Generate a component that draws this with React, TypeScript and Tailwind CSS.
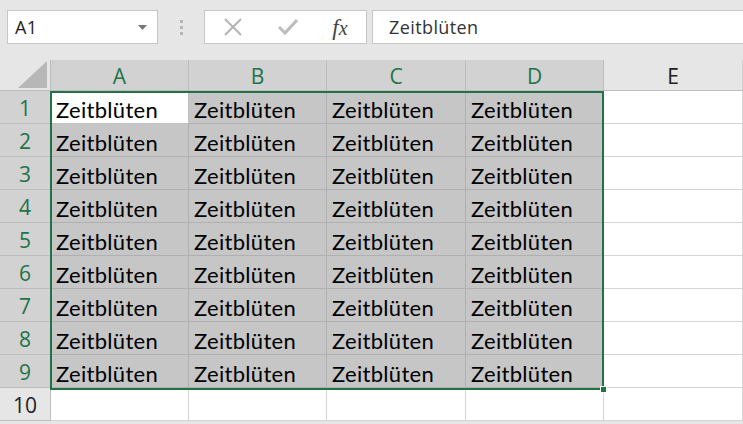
import React from "react";

const cols = ["A", "B", "C", "D", "E"];
const rows = [1, 2, 3, 4, 5, 6, 7, 8, 9, 10];

export default function App() {
  return (
    <div className="w-[743px] h-[424px] overflow-hidden bg-[#e6e6e6] relative" style={{ fontFamily: "'Noto Sans', sans-serif" }}>
      {/* top bar */}
      <div className="h-[60px] flex items-start pt-[10px]">
        <div className="ml-[7px] w-[151px] h-[34px] bg-white border border-[#c6c6c6] flex items-center justify-between pl-[7px] pr-[10px]">
          <span className="text-[18px] text-[#222] tracking-[0.3px] pt-[1px]" style={{ fontFamily: "'Open Sans', sans-serif" }}>A1</span>
          <svg width="9" height="5" viewBox="0 0 9 5"><path d="M0 0h9L4.5 5z" fill="#777" /></svg>
        </div>
        <div className="w-[46px] h-[34px] flex flex-col items-center justify-center gap-[3px]">
          <div className="w-[3px] h-[3px] bg-[#b5b5b5]" />
          <div className="w-[3px] h-[3px] bg-[#b5b5b5]" />
          <div className="w-[3px] h-[3px] bg-[#b5b5b5]" />
        </div>
        <div className="w-[163px] h-[34px] bg-white border border-[#c6c6c6] flex items-center">
          <div className="w-[56px] flex justify-center">
            <svg width="20" height="20" viewBox="0 0 20 20"><path d="M2 2L18 18M18 2L2 18" stroke="#b4b4b4" strokeWidth="2" /></svg>
          </div>
          <div className="w-[54px] flex justify-center">
            <svg width="20" height="18" viewBox="0 0 20 18"><path d="M1 9l6 6L19 2" stroke="#bcbcbc" strokeWidth="3" fill="none" /></svg>
          </div>
          <div className="w-[50px] flex justify-center">
            <span className="text-[23px] italic text-[#444] leading-none" style={{ fontFamily: "'Liberation Serif', serif" }}>f<span className="text-[20px]">x</span></span>
          </div>
        </div>
        <div className="ml-[5px] flex-1 h-[34px] bg-white border border-[#c6c6c6] border-r-0 flex items-center pl-[16px]">
          <span className="text-[18px] text-[#333] tracking-[0.4px] pt-[1px]" style={{ fontFamily: "'Open Sans', sans-serif" }}>Zeitblüten</span>
        </div>
      </div>

      {/* grid */}
      <div className="grid grid-cols-[51px_138px_138px_139px_138px_139px] grid-rows-[31px_repeat(10,33px)]">
        <div className="bg-[#e6e6e6] border-r border-b border-[#bdbdbd] relative">
          <svg className="absolute right-[3px] bottom-[2px]" width="29" height="27" viewBox="0 0 29 27"><path d="M29 0V27H0z" fill="#b7b7b7" /></svg>
        </div>
        {cols.map((c) => (
          <div
            key={c}
            className={`flex items-center justify-center pt-[4px] text-[21px] border-b border-r ${c === "E" ? "bg-[#e6e6e6] text-[#222] border-[#d0d0d0] border-b-[#bdbdbd]" : "bg-[#d2d2d2] text-[#217346] border-[#bdbdbd]"}`}
            style={{ fontFamily: "'Open Sans', sans-serif" }}
          >
            {c}
          </div>
        ))}
        {rows.map((r) => (
          <React.Fragment key={r}>
            <div
              className={`flex items-center justify-center pt-[4px] text-[21px] border-r border-b border-[#bdbdbd] ${r === 10 ? "bg-[#e6e6e6] text-[#222]" : "bg-[#d2d2d2] text-[#217346]"}`}
              style={{ fontFamily: "'Open Sans', sans-serif" }}
            >
              {r}
            </div>
            {cols.map((c) => {
              const sel = r <= 9 && c !== "E";
              const active = r === 1 && c === "A";
              return (
                <div
                  key={c}
                  className={`flex items-center pl-[5px] pt-[4px] text-[22px] tracking-[0.3px] text-black border-r border-b ${active ? "bg-white border-[#c0c0c0]" : sel ? "bg-[#c6c6c6] border-[#b0b0b0]" : "bg-white border-[#d4d4d4]"}`}
                  style={{ fontFamily: "Lato, sans-serif" }}
                >
                  {sel ? "Zeitblüten" : ""}
                </div>
              );
            })}
          </React.Fragment>
        ))}
      </div>

      {/* selection overlay */}
      <div className="absolute left-[50px] top-[91px] w-[554px] h-[299px] border-2 border-[#217346] pointer-events-none" />
      <div className="absolute left-[600px] top-[386px] w-[7px] h-[7px] bg-[#217346] border border-white" />
    </div>
  );
}
